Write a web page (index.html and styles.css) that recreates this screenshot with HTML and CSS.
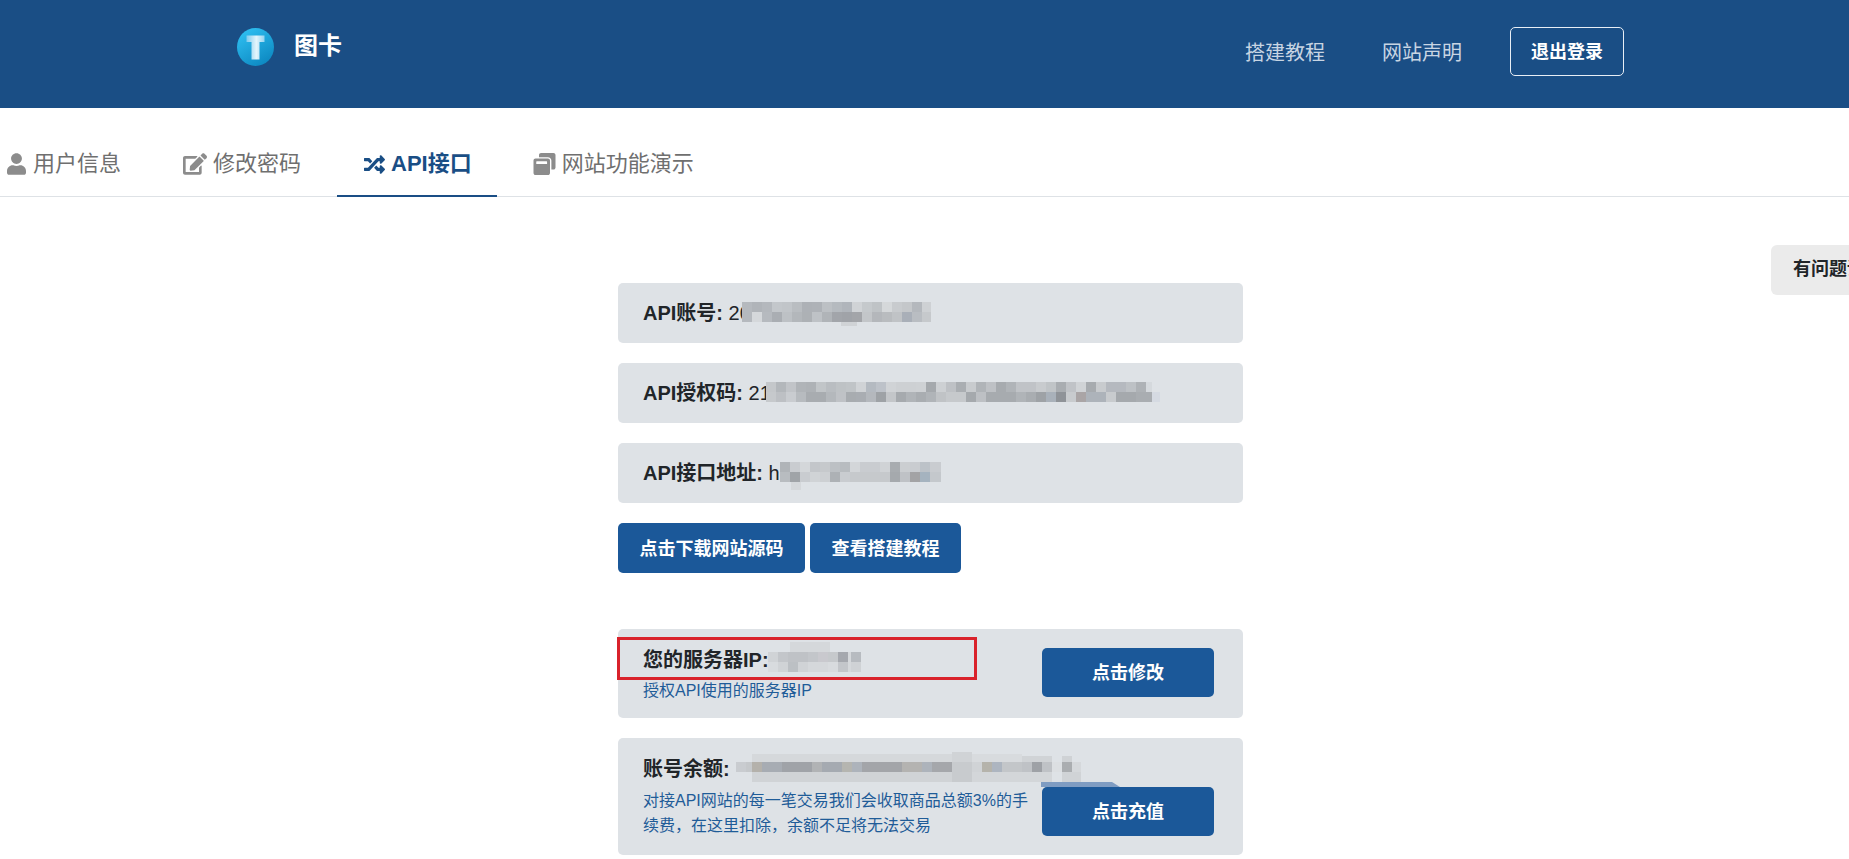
FILE: index.html
```html
<!DOCTYPE html>
<html lang="zh-CN">
<head>
<meta charset="utf-8">
<title>图卡</title>
<link rel="stylesheet" href="styles.css">
</head>
<body>
<header class="topbar">
  <a class="brand">
    <svg class="logo" viewBox="0 0 37 38">
      <defs>
        <linearGradient id="ball" x1="0.2" y1="0" x2="0.8" y2="1"><stop offset="0" stop-color="#2fc0f2"/><stop offset="1" stop-color="#0b86bf"/></linearGradient>
        <linearGradient id="tee" x1="0" y1="0" x2="1" y2="0"><stop offset="0" stop-color="#7fcbee"/><stop offset="0.55" stop-color="#e4f5fc"/><stop offset="1" stop-color="#93d4f1"/></linearGradient>
      </defs>
      <ellipse cx="18.5" cy="19" rx="18.5" ry="19" fill="url(#ball)"/>
      <path d="M9.500 7.500h18v6.500h-5v17.500h-8v-17.500h-5z" fill="url(#tee)"/>
    </svg>
    <span class="brand-name">图卡</span>
  </a>
  <nav class="topnav">
    <a class="topnav-link">搭建教程</a>
    <a class="topnav-link">网站声明</a>
    <a class="logout">退出登录</a>
  </nav>
</header>

<nav class="tabs">
  <a class="tab tab-first">
    <svg class="ico ico-user" viewBox="0 0 448 512"><path d="M224 256c70.700 0 128-57.300 128-128S294.700 0 224 0 96 57.300 96 128s57.300 128 128 128zm89.600 32h-16.700c-22.200 10.200-46.900 16-72.900 16s-50.600-5.800-72.900-16h-16.700C60.200 288 0 348.200 0 422.400V464c0 26.500 21.500 48 48 48h352c26.500 0 48-21.500 48-48v-41.600c0-74.200-60.200-134.400-134.400-134.400z"/></svg>用户信息</a>
  <a class="tab">
    <svg class="ico ico-edit" viewBox="0 0 576 512"><path d="M402.600 83.200l90.200 90.200c3.800 3.800 3.800 10 0 13.800L274.400 405.600l-92.800 10.300c-12.400 1.400-22.900-9.100-21.500-21.500l10.300-92.800L388.800 83.200c3.800-3.800 10-3.800 13.800 0zm162-22.900l-48.800-48.800c-15.200-15.200-39.900-15.200-55.200 0l-35.400 35.400c-3.800 3.800-3.800 10 0 13.800l90.200 90.200c3.800 3.800 10 3.800 13.800 0l35.400-35.400c15.200-15.300 15.200-40 0-55.200zM384 346.200V448H64V128h229.800c3.200 0 6.200-1.300 8.500-3.500l40-40c7.600-7.600 2.200-20.500-8.500-20.500H48C21.500 64 0 85.500 0 112v352c0 26.500 21.500 48 48 48h352c26.500 0 48-21.500 48-48V306.200c0-10.700-12.900-16-20.500-8.500l-40 40c-2.200 2.300-3.500 5.300-3.500 8.500z"/></svg>修改密码</a>
  <a class="tab tab-active">
    <svg class="ico ico-random" viewBox="0 0 512 512"><path d="M504.971 359.029c9.373 9.373 9.373 24.569 0 33.941l-80 79.984c-15.010 15.010-40.971 4.490-40.971-16.971V416h-58.785a12.004 12.004 0 0 1-8.773-3.812l-70.556-75.596 53.333-57.143L352 336h32v-39.981c0-21.438 25.943-31.998 40.971-16.971l80 79.981zM12 176h84l52.781 56.551 53.333-57.143-70.556-75.596A11.999 11.999 0 0 0 122.785 96H12c-6.627 0-12 5.373-12 12v56c0 6.627 5.373 12 12 12zm372 0v39.984c0 21.460 25.961 31.980 40.971 16.971l80-79.984c9.373-9.373 9.373-24.569 0-33.941l-80-79.981C409.943 24.021 384 34.582 384 56.019V96h-58.785a12.004 12.004 0 0 0-8.773 3.812L96 336H12c-6.627 0-12 5.373-12 12v56c0 6.627 5.373 12 12 12h110.785c3.326 0 6.503-1.381 8.773-3.812L352 176h32z"/></svg>API接口</a>
  <a class="tab">
    <svg class="ico ico-window" viewBox="0 0 512 512"><path d="M512 48v288c0 26.500-21.500 48-48 48h-48V176c0-44.100-35.900-80-80-80H128V48c0-26.500 21.500-48 48-48h288c26.500 0 48 21.500 48 48zM384 176v288c0 26.500-21.500 48-48 48H48c-26.500 0-48-21.500-48-48V176c0-26.500 21.500-48 48-48h288c26.500 0 48 21.500 48 48zm-68 28c0-6.600-5.400-12-12-12H76c-6.600 0-12 5.400-12 12v52h252v-52z"/></svg>网站功能演示</a>
</nav>

<main class="panel">
  <div class="card card-line">
    <span><b>API账号:</b> 20</span>
    <svg class="mosaic mosaic-account" width="189" height="24" shape-rendering="crispEdges">
      <rect x="99" y="20" width="16" height="4" fill="#d0d3d6"/>
      <rect x="0" y="0" width="10" height="10" fill="#b5b9be"/><rect x="10" y="0" width="10" height="10" fill="#b0b4b9"/><rect x="20" y="0" width="10" height="10" fill="#b4b8bd"/><rect x="30" y="0" width="10" height="10" fill="#c3c7cb"/><rect x="40" y="0" width="10" height="10" fill="#c1c5c9"/><rect x="50" y="0" width="10" height="10" fill="#b9bdc1"/><rect x="60" y="0" width="10" height="10" fill="#adb1b6"/><rect x="70" y="0" width="10" height="10" fill="#aeb2b7"/><rect x="80" y="0" width="10" height="10" fill="#bcc0c4"/><rect x="90" y="0" width="10" height="10" fill="#b5babf"/><rect x="100" y="0" width="10" height="10" fill="#b0b5bb"/><rect x="110" y="0" width="10" height="10" fill="#d0d3d6"/><rect x="120" y="0" width="10" height="10" fill="#c5c9cc"/><rect x="130" y="0" width="10" height="10" fill="#bfc3c6"/><rect x="140" y="0" width="10" height="10" fill="#d5d8da"/><rect x="150" y="0" width="10" height="10" fill="#c8cbce"/><rect x="160" y="0" width="10" height="10" fill="#c4c7ca"/><rect x="170" y="0" width="10" height="10" fill="#b4b8bd"/><rect x="180" y="0" width="9" height="10" fill="#ced1d4"/>
      <rect x="0" y="10" width="10" height="10" fill="#b5b9be"/><rect x="10" y="10" width="10" height="10" fill="#d5d8db"/><rect x="20" y="10" width="10" height="10" fill="#b6babf"/><rect x="30" y="10" width="10" height="10" fill="#aaaeb3"/><rect x="40" y="10" width="10" height="10" fill="#bdc1c5"/><rect x="50" y="10" width="10" height="10" fill="#b3b7bb"/><rect x="60" y="10" width="10" height="10" fill="#adb1b5"/><rect x="70" y="10" width="10" height="10" fill="#bec2c6"/><rect x="80" y="10" width="10" height="10" fill="#b0b4b8"/><rect x="90" y="10" width="10" height="10" fill="#a2a5aa"/><rect x="100" y="10" width="10" height="10" fill="#a0a3a8"/><rect x="110" y="10" width="10" height="10" fill="#a3a5a9"/><rect x="120" y="10" width="10" height="10" fill="#c3c6c9"/><rect x="130" y="10" width="10" height="10" fill="#b4b7bb"/><rect x="140" y="10" width="10" height="10" fill="#b9bcbf"/><rect x="150" y="10" width="10" height="10" fill="#c0c3c6"/><rect x="160" y="10" width="10" height="10" fill="#a9afb8"/><rect x="170" y="10" width="10" height="10" fill="#b9bdc2"/><rect x="180" y="10" width="9" height="10" fill="#c6c9cc"/>
    </svg>
  </div>
  <div class="card card-line">
    <span><b>API授权码:</b> 21</span>
    <svg class="mosaic mosaic-code" width="394" height="20" shape-rendering="crispEdges">
      <rect x="0" y="0" width="10" height="10" fill="#c4c7ca"/><rect x="10" y="0" width="10" height="10" fill="#b3b7bb"/><rect x="20" y="0" width="10" height="10" fill="#c1c4c8"/><rect x="30" y="0" width="10" height="10" fill="#b0b4b8"/><rect x="40" y="0" width="10" height="10" fill="#aeb2b6"/><rect x="50" y="0" width="10" height="10" fill="#c1c5c8"/><rect x="60" y="0" width="10" height="10" fill="#b9bdc1"/><rect x="70" y="0" width="10" height="10" fill="#bec2c5"/><rect x="80" y="0" width="10" height="10" fill="#c0c4c7"/><rect x="90" y="0" width="10" height="10" fill="#d0d3d6"/><rect x="100" y="0" width="10" height="10" fill="#b4bac1"/><rect x="110" y="0" width="10" height="10" fill="#bdc2c9"/><rect x="120" y="0" width="10" height="10" fill="#d0d3d6"/><rect x="130" y="0" width="10" height="10" fill="#cdd0d3"/><rect x="140" y="0" width="10" height="10" fill="#cdd0d3"/><rect x="150" y="0" width="10" height="10" fill="#ced1d4"/><rect x="160" y="0" width="10" height="10" fill="#a5a9ad"/><rect x="170" y="0" width="10" height="10" fill="#cdd0d3"/><rect x="180" y="0" width="10" height="10" fill="#bec1c5"/><rect x="190" y="0" width="10" height="10" fill="#aaaeb2"/><rect x="200" y="0" width="10" height="10" fill="#c8cbce"/><rect x="210" y="0" width="10" height="10" fill="#b0b4b8"/><rect x="220" y="0" width="10" height="10" fill="#bec1c5"/><rect x="230" y="0" width="10" height="10" fill="#a7abaf"/><rect x="240" y="0" width="10" height="10" fill="#b0b4b8"/><rect x="250" y="0" width="10" height="10" fill="#c0c3c7"/><rect x="260" y="0" width="10" height="10" fill="#c0c3c7"/><rect x="270" y="0" width="10" height="10" fill="#c8cbce"/><rect x="280" y="0" width="10" height="10" fill="#c0c4c7"/><rect x="290" y="0" width="10" height="10" fill="#a9adb1"/><rect x="300" y="0" width="10" height="10" fill="#c0c3c7"/><rect x="310" y="0" width="10" height="10" fill="#d0d3d6"/><rect x="320" y="0" width="10" height="10" fill="#a7abaf"/><rect x="330" y="0" width="10" height="10" fill="#c8cbce"/><rect x="340" y="0" width="10" height="10" fill="#b5b9bf"/><rect x="350" y="0" width="10" height="10" fill="#b5b9bf"/><rect x="360" y="0" width="10" height="10" fill="#bdc1c5"/><rect x="370" y="0" width="10" height="10" fill="#aeb2b6"/><rect x="380" y="0" width="6" height="10" fill="#d5d9dd"/>
      <rect x="0" y="10" width="10" height="10" fill="#c6c9cc"/><rect x="10" y="10" width="10" height="10" fill="#bdc0c4"/><rect x="20" y="10" width="10" height="10" fill="#c9ccd0"/><rect x="30" y="10" width="10" height="10" fill="#b7bbbf"/><rect x="40" y="10" width="10" height="10" fill="#a8acb0"/><rect x="50" y="10" width="10" height="10" fill="#a8acb0"/><rect x="60" y="10" width="10" height="10" fill="#b4b8bc"/><rect x="70" y="10" width="10" height="10" fill="#bfc2c6"/><rect x="80" y="10" width="10" height="10" fill="#a8acb0"/><rect x="90" y="10" width="10" height="10" fill="#a9adb2"/><rect x="100" y="10" width="10" height="10" fill="#b4b8bd"/><rect x="110" y="10" width="10" height="10" fill="#9ea2a6"/><rect x="120" y="10" width="10" height="10" fill="#c3c6c9"/><rect x="130" y="10" width="10" height="10" fill="#a6aaae"/><rect x="140" y="10" width="10" height="10" fill="#b0b4b8"/><rect x="150" y="10" width="10" height="10" fill="#a9adb1"/><rect x="160" y="10" width="10" height="10" fill="#b0b4b8"/><rect x="170" y="10" width="10" height="10" fill="#c0c3c6"/><rect x="180" y="10" width="10" height="10" fill="#c6c9cc"/><rect x="190" y="10" width="10" height="10" fill="#c6c9cc"/><rect x="200" y="10" width="10" height="10" fill="#a5a9ad"/><rect x="210" y="10" width="10" height="10" fill="#bdc0c4"/><rect x="220" y="10" width="10" height="10" fill="#a7abaf"/><rect x="230" y="10" width="10" height="10" fill="#a7abaf"/><rect x="240" y="10" width="10" height="10" fill="#a7abaf"/><rect x="250" y="10" width="10" height="10" fill="#b0b4b8"/><rect x="260" y="10" width="10" height="10" fill="#a9adb1"/><rect x="270" y="10" width="10" height="10" fill="#9ea2a6"/><rect x="280" y="10" width="10" height="10" fill="#a9b1ba"/><rect x="290" y="10" width="10" height="10" fill="#8f9398"/><rect x="300" y="10" width="10" height="10" fill="#c8cbce"/><rect x="310" y="10" width="10" height="10" fill="#aaa5a6"/><rect x="320" y="10" width="10" height="10" fill="#adb3ba"/><rect x="330" y="10" width="10" height="10" fill="#adb3ba"/><rect x="340" y="10" width="10" height="10" fill="#c8cbce"/><rect x="350" y="10" width="10" height="10" fill="#a5a9ad"/><rect x="360" y="10" width="10" height="10" fill="#a5a9ad"/><rect x="370" y="10" width="16" height="10" fill="#a9adb1"/><rect x="386" y="10" width="8" height="10" fill="#d5dae2"/>
    </svg>
  </div>
  <div class="card card-line">
    <span><b>API接口地址:</b> h</span>
    <svg class="mosaic mosaic-url" width="161" height="28" shape-rendering="crispEdges">
      <rect x="11" y="20" width="10" height="8" fill="#d5d8db"/>
      <rect x="0" y="0" width="10" height="10" fill="#b0b4b8"/><rect x="10" y="0" width="10" height="10" fill="#c9ccd0"/><rect x="20" y="0" width="10" height="10" fill="#d4d7da"/><rect x="30" y="0" width="10" height="10" fill="#c3c6ca"/><rect x="40" y="0" width="10" height="10" fill="#c6c9cc"/><rect x="50" y="0" width="10" height="10" fill="#bcc0c4"/><rect x="60" y="0" width="10" height="10" fill="#b8bcc0"/><rect x="70" y="0" width="10" height="10" fill="#d3d6d9"/><rect x="80" y="0" width="10" height="10" fill="#c9ccd0"/><rect x="90" y="0" width="10" height="10" fill="#c9ccd0"/><rect x="100" y="0" width="10" height="10" fill="#d0d3d6"/><rect x="110" y="0" width="10" height="10" fill="#a8acb0"/><rect x="120" y="0" width="10" height="10" fill="#cbced1"/><rect x="130" y="0" width="10" height="10" fill="#c9ccd0"/><rect x="140" y="0" width="10" height="10" fill="#bcc2c8"/><rect x="150" y="0" width="11" height="10" fill="#c9ccd0"/>
      <rect x="0" y="10" width="10" height="10" fill="#b8bcc0"/><rect x="10" y="10" width="10" height="10" fill="#a0a4a8"/><rect x="20" y="10" width="10" height="10" fill="#c9ccd0"/><rect x="30" y="10" width="10" height="10" fill="#d0d3d6"/><rect x="40" y="10" width="10" height="10" fill="#cdd0d3"/><rect x="50" y="10" width="10" height="10" fill="#adb1b5"/><rect x="60" y="10" width="10" height="10" fill="#c9ccd0"/><rect x="70" y="10" width="40" height="10" fill="#c6c9cc"/><rect x="110" y="10" width="10" height="10" fill="#a5a9ad"/><rect x="120" y="10" width="10" height="10" fill="#bfc2c6"/><rect x="130" y="10" width="10" height="10" fill="#a3a3a5"/><rect x="140" y="10" width="10" height="10" fill="#a5b3bf"/><rect x="150" y="10" width="11" height="10" fill="#c4c8cc"/>
    </svg>
  </div>
  <div class="actions">
    <a class="btn">点击下载网站源码</a>
    <a class="btn">查看搭建教程</a>
  </div>

  <section class="card card-block card-ip">
    <div class="card-body">
      <div class="card-title">您的服务器IP:</div>
      <p class="card-note">授权API使用的服务器IP</p>
    </div>
    <a class="btn btn-side">点击修改</a>
    <svg class="mosaic mosaic-ip" width="93" height="30" shape-rendering="crispEdges">
      <rect x="22" y="0" width="40" height="10" fill="#d5d8db"/>
      <rect x="0" y="10" width="10" height="10" fill="#d0d3d6"/><rect x="10" y="10" width="10" height="10" fill="#c3c6ca"/><rect x="20" y="10" width="20" height="10" fill="#bfc2c6"/><rect x="40" y="10" width="10" height="10" fill="#c3c6ca"/><rect x="50" y="10" width="10" height="10" fill="#c9c9ce"/><rect x="60" y="10" width="10" height="10" fill="#c6c9cc"/><rect x="70" y="10" width="10" height="10" fill="#a5a8ae"/><rect x="80" y="10" width="3" height="10" fill="#d5d8db"/><rect x="83" y="10" width="10" height="10" fill="#b7bbc0"/>
      <rect x="0" y="20" width="10" height="10" fill="#d8dbde"/><rect x="10" y="20" width="10" height="10" fill="#d0d3d6"/><rect x="20" y="20" width="10" height="10" fill="#bcc0c4"/><rect x="30" y="20" width="10" height="10" fill="#d0d3d6"/><rect x="40" y="20" width="20" height="10" fill="#d5d8db"/><rect x="60" y="20" width="10" height="10" fill="#d8dbde"/><rect x="70" y="20" width="10" height="10" fill="#c3c6ca"/><rect x="80" y="20" width="3" height="10" fill="#d5d8db"/><rect x="83" y="20" width="10" height="10" fill="#cfd2d5"/>
    </svg>
    <div class="redbox"></div>
  </section>

  <section class="card card-block card-balance">
    <div class="card-body">
      <div class="card-title">账号余额:</div>
      <p class="card-note">对接API网站的每一笔交易我们会收取商品总额3%的手续费，在这里扣除，余额不足将无法交易</p>
    </div>
    <a class="btn btn-side">点击充值</a>
    <svg class="mosaic mosaic-balance" width="345" height="30" shape-rendering="crispEdges">
      <rect x="16" y="2" width="200" height="8" fill="#d5d8db"/><rect x="216" y="0" width="20" height="10" fill="#d0d3d6"/><rect x="236" y="2" width="50" height="8" fill="#d8dbde"/><rect x="286" y="4" width="30" height="6" fill="#d0d3d6"/><rect x="326" y="4" width="10" height="6" fill="#cfd2d5"/>
      <rect x="0" y="10" width="10" height="10" fill="#c9ccd0"/><rect x="10" y="10" width="6" height="10" fill="#c5c8cb"/><rect x="16" y="10" width="10" height="10" fill="#b4b1ab"/><rect x="26" y="10" width="20" height="10" fill="#a7acb3"/><rect x="46" y="10" width="30" height="10" fill="#a0a3a8"/><rect x="76" y="10" width="10" height="10" fill="#b1b3b5"/><rect x="86" y="10" width="20" height="10" fill="#a5aab1"/><rect x="106" y="10" width="10" height="10" fill="#b5b5b0"/><rect x="116" y="10" width="10" height="10" fill="#adb3bb"/><rect x="126" y="10" width="40" height="10" fill="#a3a5a9"/><rect x="166" y="10" width="20" height="10" fill="#b4b3b1"/><rect x="186" y="10" width="10" height="10" fill="#adb3bb"/><rect x="196" y="10" width="20" height="10" fill="#a5a7ab"/><rect x="216" y="10" width="20" height="10" fill="#c8cbce"/><rect x="236" y="10" width="10" height="10" fill="#d0d3d6"/><rect x="246" y="10" width="10" height="10" fill="#b5b3ab"/><rect x="256" y="10" width="10" height="10" fill="#adb5c0"/><rect x="266" y="10" width="20" height="10" fill="#c3c6c9"/><rect x="286" y="10" width="10" height="10" fill="#bfc2c6"/><rect x="296" y="10" width="10" height="10" fill="#9ea1a6"/><rect x="306" y="10" width="10" height="10" fill="#bfc2c6"/><rect x="316" y="10" width="10" height="10" fill="#dcdfe2"/><rect x="326" y="10" width="10" height="10" fill="#aaadb0"/><rect x="336" y="10" width="9" height="10" fill="#d5d8db"/>
      <rect x="16" y="20" width="200" height="10" fill="#d0d3d6"/><rect x="216" y="20" width="20" height="10" fill="#c8cbce"/><rect x="236" y="20" width="80" height="10" fill="#d3d6d9"/><rect x="326" y="20" width="19" height="10" fill="#d0d3d6"/>
    </svg>
    <svg class="smudge" width="80" height="5"><path d="M0 0h71l8 5H0z" fill="#7f9cc2"/></svg>
  </section>
</main>

<aside class="help">有问题请联系客服</aside>
</body>
</html>
```
FILE: styles.css
```css
* { box-sizing: border-box; }
html, body { margin: 0; padding: 0; }
body {
  width: 1849px;
  height: 859px;
  overflow: hidden;
  position: relative;
  background: #fff;
  color: #212529;
  font-family: "Liberation Sans", "Noto Sans CJK SC", sans-serif;
}
.topbar {
  height: 108px;
  background: #1a4e85;
  display: flex;
  align-items: center;
  justify-content: space-between;
  padding: 0 225px 0 237px;
}
.brand { display: flex; align-items: center; gap: 20px; margin-top: -14px; }
.logo { width: 37px; height: 38px; display: block; }
.brand-name { font-size: 24px; line-height: 32px; font-weight: 700; color: #fff; margin-bottom: 3px; }
.topnav { display: flex; align-items: center; margin-top: -5px; }
.topnav-link { font-size: 20px; line-height: 30px; color: #c8d5e3; margin-right: 57px; padding-top: 2px; }
.topnav-link + .topnav-link { margin-right: 48px; }
.logout {
  width: 114px;
  height: 49px;
  padding-bottom: 3px;
  border: 1px solid #e8eef5;
  border-radius: 5px;
  display: flex;
  align-items: center;
  justify-content: center;
  font-size: 18px;
  font-weight: 700;
  color: #fff;
}
.tabs {
  height: 89px;
  border-bottom: 1px solid #dee2e6;
  display: flex;
  align-items: flex-end;
  gap: 8px;
}
.tab {
  display: flex;
  align-items: center;
  height: 49px;
  padding: 0 27px 15px;
  margin-bottom: -1px;
  border-bottom: 2px solid transparent;
  font-size: 22px;
  line-height: 32px;
  color: #6f6f6f;
  white-space: nowrap;
}
.tab-first { margin-left: -20px; }
.tab-active {
  margin-left: 1px;
  margin-right: 1px;
  padding-right: 25px;
  color: #1a4e85;
  font-weight: 700;
  border-bottom-color: #1a4e85;
}
.ico { display: block; fill: #8c8c8c; margin-right: 6px; flex: none; }
.tab-active .ico { fill: #1a4e85; }
.ico-user { width: 19px; height: 22px; margin-right: 7px; }
.ico-edit { width: 24px; height: 22px; }
.ico-random { width: 21px; height: 21px; }
.ico-window { width: 23px; height: 22px; }
.panel {
  width: 625px;
  margin-left: 618px;
  padding-top: 86px;
}
.card {
  position: relative;
  background: #dee2e6;
  border-radius: 5px;
  font-size: 20px;
}
.card-line {
  height: 60px;
  margin-bottom: 20px;
  padding: 0 25px;
  display: flex;
  align-items: center;
  line-height: 30px;
}
.card-line b, .card-title { font-weight: 700; }
.actions { display: flex; gap: 5px; height: 50px; margin-bottom: 56px; }
.btn {
  display: flex;
  align-items: center;
  justify-content: center;
  height: 50px;
  padding: 0 21.5px 3px;
  background: #1b5899;
  border-radius: 5px;
  font-size: 18px;
  font-weight: 700;
  color: #fff;
}
.card-block {
  display: flex;
  justify-content: space-between;
  padding: 0 29px 0 25px;
  margin-bottom: 20px;
}
.card-ip { height: 89px; align-items: center; }
.card-balance { height: 117px; align-items: flex-end; padding-bottom: 19px; }
.card-balance .card-body { align-self: flex-start; padding-top: 16px; }
.card-body { width: 390px; }
.card-title { font-size: 20px; line-height: 30px; font-weight: 700; }
.card-note { margin: 4px 0 0; font-size: 16px; line-height: 24px; color: #1f5c98; }
.card-balance .card-note { line-height: 25px; }
.btn-side { width: 172px; height: 49px; padding: 0 0 3px; flex: none; }
.card-ip .btn-side { margin-bottom: 2px; }
.mosaic { position: absolute; display: block; filter: blur(0.6px); }
.mosaic-account { left: 124px; top: 19px; }
.mosaic-code { left: 148px; top: 19px; }
.mosaic-url { left: 162px; top: 19px; }
.mosaic-ip { left: 150px; top: 13px; }
.mosaic-balance { left: 118px; top: 14px; }
.smudge { position: absolute; left: 423px; top: 44px; display: block; }
.redbox {
  position: absolute;
  left: -1px;
  top: 8px;
  width: 360px;
  height: 43px;
  border: 3px solid #d9222b;
}
.help {
  position: absolute;
  left: 1771px;
  top: 245px;
  width: 150px;
  height: 50px;
  padding-left: 22px;
  background: #ebebeb;
  border-radius: 6px;
  font-size: 18px;
  font-weight: 700;
  line-height: 48px;
  color: #212529;
  white-space: nowrap;
}
```
